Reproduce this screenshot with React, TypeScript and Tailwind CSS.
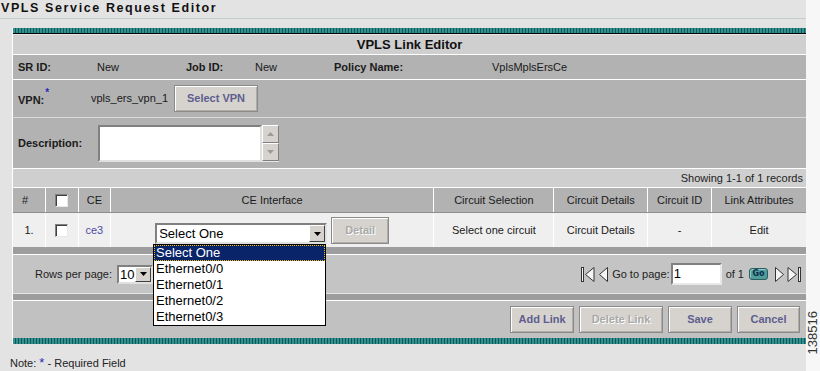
import React from 'react'

const COLS = [
  { label: '#', w: 'w-[32px]' },
  { label: '', w: 'w-[33px]' },
  { label: 'CE', w: 'w-[32px]' },
  { label: 'CE Interface', w: 'w-[324px]' },
  { label: 'Circuit Selection', w: 'w-[120px]' },
  { label: 'Circuit Details', w: 'w-[94px]' },
  { label: 'Circuit ID', w: 'w-[64px]' },
  { label: 'Link Attributes', w: 'w-[95px]' },
]

const OPTIONS = ['Select One', 'Ethernet0/0', 'Ethernet0/1', 'Ethernet0/2', 'Ethernet0/3']

function Stripe({ h }: { h: string }) {
  return (
    <div
      className={`${h} bg-[repeating-linear-gradient(90deg,#35908f_0px,#35908f_2px,#0d5a5a_2px,#0d5a5a_3px)]`}
    />
  )
}

function Checkbox() {
  return (
    <span className="inline-block w-[13px] h-[13px] bg-white border border-t-[#808080] border-l-[#808080] border-b-[#e8e8e8] border-r-[#e8e8e8] shadow-[inset_1px_1px_0_#404040]" />
  )
}

function Btn({ children, disabled, w }: { children: React.ReactNode; disabled?: boolean; w: string }) {
  return (
    <button
      className={`${w} h-[27px] bg-[#d6d3ce] border border-[#8a8a8a] shadow-[inset_1px_1px_0_#ffffff,inset_-1px_-1px_0_#b0aca6] text-[11px] font-bold ${
        disabled ? 'text-[#a9a9a9] [text-shadow:1px_1px_0_#ffffff]' : 'text-[#5e5e8e]'
      }`}
    >
      {children}
    </button>
  )
}

function Arrow({ up }: { up?: boolean }) {
  return (
    <svg width="7" height="4" viewBox="0 0 7 4">
      <path d={up ? 'M0 4 L3.5 0 L7 4 Z' : 'M0 0 L3.5 4 L7 0 Z'} fill="currentColor" />
    </svg>
  )
}

function DropBtn({ h }: { h: string }) {
  return (
    <span
      className={`${h} w-[16px] flex items-center justify-center bg-[#d6d3ce] border border-t-white border-l-white border-b-[#404040] border-r-[#404040] text-black`}
    >
      <Arrow />
    </span>
  )
}

// first / previous / next / last page glyphs
function FirstIcon() {
  return (
    <svg width="14" height="17" viewBox="0 0 14 17">
      <rect x="0.5" y="1.5" width="2" height="14" fill="#f4f4f4" stroke="#333" strokeWidth="1" />
      <path d="M13 1.5 L4.5 8.5 L13 15.5 Z" fill="#f4f4f4" stroke="#333" strokeWidth="1" />
    </svg>
  )
}
function PrevIcon() {
  return (
    <svg width="9" height="17" viewBox="0 0 9 17">
      <path d="M8.5 1.5 L0.5 8.5 L8.5 15.5 Z" fill="#f4f4f4" stroke="#333" strokeWidth="1" />
    </svg>
  )
}
function NextIcon() {
  return (
    <svg width="9" height="17" viewBox="0 0 9 17">
      <path d="M0.5 1.5 L8.5 8.5 L0.5 15.5 Z" fill="#f4f4f4" stroke="#333" strokeWidth="1" />
    </svg>
  )
}
function LastIcon() {
  return (
    <svg width="14" height="17" viewBox="0 0 14 17">
      <path d="M1 1.5 L9.5 8.5 L1 15.5 Z" fill="#f4f4f4" stroke="#333" strokeWidth="1" />
      <rect x="11.5" y="1.5" width="2" height="14" fill="#f4f4f4" stroke="#333" strokeWidth="1" />
    </svg>
  )
}

export default function App() {
  return (
    <div className="relative w-[820px] h-[371px] overflow-hidden bg-[#f7f7f7] font-['Liberation_Sans',Arial,sans-serif] text-[11px] text-[#1a1a1a]">
      <div className="w-[806px] h-full bg-[#e3e3e3]">
        {/* Title */}
        <div className="h-[18px] pl-[1px] pt-[1px] text-[12.5px] font-bold tracking-[1.6px] text-[#111] leading-[15px]">
          VPLS Service Request Editor
        </div>
        <div className="h-px bg-[#c3cfcf]" />

        {/* Panel */}
        <div className="ml-[12px] mt-[9px] border-l border-white">
          <Stripe h="h-[5px]" />
          <div className="h-px bg-black" />
          <div className="h-px bg-[#e6e6e6]" />
          <div className="h-[19px] bg-[#cfcfcf] flex items-center justify-center text-[13px] font-bold text-[#111]">
            VPLS Link Editor
          </div>
          <div className="h-px bg-white" />

          <div className="h-[24px] bg-[#b2b2b2] flex items-center pl-[5px]">
            <span className="w-[79px] font-bold">SR ID:</span>
            <span className="w-[89px]">New</span>
            <span className="w-[69px] font-bold">Job ID:</span>
            <span className="w-[79px]">New</span>
            <span className="w-[158px] font-bold">Policy Name:</span>
            <span>VplsMplsErsCe</span>
          </div>
          <div className="h-px bg-white" />

          <div className="h-[37px] bg-[#b2b2b2] flex items-center pl-[5px]">
            <span className="w-[73px] font-bold flex items-start pt-[3px]">
              VPN:<span className="text-[#2a2ab8] text-[10px] leading-[8px] ml-[1px] -mt-[3px]">*</span>
            </span>
            <span className="w-[83px]">vpls_ers_vpn_1</span>
            <Btn w="w-[84px]">Select VPN</Btn>
          </div>
          <div className="h-px bg-[#d9d9d9]" />

          <div className="h-[50px] bg-[#b2b2b2] flex items-center pl-[5px]">
            <span className="w-[80px] font-bold">Description:</span>
            <div className="flex h-[37px]">
              <div className="w-[164px] h-full bg-white border-2 border-t-[#808080] border-l-[#808080] border-b-[#e0e0e0] border-r-[#e0e0e0]" />
              <div className="flex flex-col w-[17px] h-full bg-[#e6e6e6]">
                <span className="h-[18px] flex items-center justify-center bg-[#d6d3ce] border border-t-white border-l-white border-b-[#808080] border-r-[#808080] text-[#9a9a9a]">
                  <Arrow up />
                </span>
                <span className="h-[18px] flex items-center justify-center bg-[#d6d3ce] border border-t-white border-l-white border-b-[#808080] border-r-[#808080] text-[#9a9a9a]">
                  <Arrow />
                </span>
              </div>
            </div>
          </div>
          <div className="h-px bg-white" />

          <div className="h-[18px] bg-[#cfcfcf] flex items-center justify-end pr-[3px] text-[#222]">
            Showing 1-1 of 1 records
          </div>
          <div className="h-px bg-white" />

          {/* Table header */}
          <div className="h-[24px] bg-[#b2b2b2] flex">
            {COLS.map((c, i) => (
              <div
                key={i}
                className={`${c.w} h-full flex items-center ${i === 0 ? 'pl-[9px]' : 'justify-center border-l border-white'}`}
              >
                {i === 1 ? <Checkbox /> : c.label}
              </div>
            ))}
          </div>
          <div className="h-px bg-[#8e8e8e]" />

          {/* Data row */}
          <div className="relative h-[34px] bg-[#efefef] flex">
            <div className="w-[32px] flex items-center justify-center">1.</div>
            <div className="w-[33px] flex items-center justify-center border-l border-white">
              <Checkbox />
            </div>
            <div className="w-[32px] flex items-center justify-center border-l border-white text-[#4c4ca6]">ce3</div>
            <div className="w-[324px] flex items-center justify-center gap-[4px] border-l border-white">
              <div className="w-[172px] h-[21px] mt-[7px] bg-white border-2 border-t-[#808080] border-l-[#808080] border-b-[#e0e0e0] border-r-[#e0e0e0] flex items-center justify-between">
                <span className="pl-[2px] text-[13px] leading-[15px] text-black">Select One</span>
                <DropBtn h="h-[17px]" />
              </div>
              <Btn w="w-[58px]" disabled>
                Detail
              </Btn>
            </div>
            <div className="w-[120px] flex items-center justify-center border-l border-white">Select one circuit</div>
            <div className="w-[94px] flex items-center justify-center border-l border-white">Circuit Details</div>
            <div className="w-[64px] flex items-center justify-center border-l border-white">-</div>
            <div className="w-[95px] flex items-center justify-center border-l border-white">Edit</div>

            {/* Open dropdown list */}
            <div className="absolute left-[140px] top-[31px] z-10 w-[173px] bg-white border border-black text-[13px] leading-[16px] text-black">
              {OPTIONS.map((o, i) => (
                <div
                  key={o}
                  className={`h-[16px] pl-[2px] ${i === 0 ? 'bg-[#0a246a] text-white outline outline-1 outline-dotted outline-[#f0c000] -outline-offset-1' : ''}`}
                >
                  {o}
                </div>
              ))}
            </div>
          </div>
          <div className="h-[7px] bg-[#9d9d9d]" />
          <div className="h-px bg-white" />

          {/* Pagination */}
          <div className="h-[38px] bg-[#c4c4c4] flex items-center justify-between pl-[22px] pr-[5px]">
            <div className="flex items-center gap-[5px] text-[#222]">
              <span>Rows per page:</span>
              <div className="w-[36px] h-[19px] bg-white border-2 border-t-[#808080] border-l-[#808080] border-b-[#e0e0e0] border-r-[#e0e0e0] flex items-center justify-between">
                <span className="pl-[1px] text-[13px] text-black leading-[15px]">10</span>
                <DropBtn h="h-[15px]" />
              </div>
            </div>
            <div className="flex items-center text-[#222]">
              <FirstIcon />
              <span className="ml-[4px] flex"><PrevIcon /></span>
              <span className="ml-[4px]">Go to page:</span>
              <div className="ml-px w-[51px] h-[22px] bg-white border-2 border-t-[#808080] border-l-[#808080] border-b-[#e8e8e8] border-r-[#e8e8e8] flex items-center pl-[1px] text-[13px] text-black">
                1
              </div>
              <span className="ml-[4px]">of 1</span>
              <span className="ml-[5px] w-[19px] h-[12px] rounded-[3px] bg-[#4f9c9a] border border-[#2b5e5e] shadow-[inset_1px_1px_0_#8fcaca] flex items-center justify-center text-[8px] font-bold text-[#0b2e4e] leading-[10px] font-['DejaVu_Sans',sans-serif]">
                Go
              </span>
              <span className="ml-[7px] flex"><NextIcon /></span>
              <span className="ml-[3px] flex"><LastIcon /></span>
            </div>
          </div>
          <div className="h-px bg-[#e4e4e4]" />
          <div className="h-[6px] bg-[#9d9d9d]" />
          <div className="h-px bg-white" />

          {/* Buttons */}
          <div className="h-[37px] bg-[#c1c1c1] flex items-center justify-end gap-[5px] pr-[6px]">
            <Btn w="w-[64px]">Add Link</Btn>
            <Btn w="w-[84px]" disabled>
              Delete Link
            </Btn>
            <Btn w="w-[64px]">Save</Btn>
            <Btn w="w-[63px]">Cancel</Btn>
          </div>
          <Stripe h="h-[6px]" />
        </div>

        <div className="mt-[11px] pl-[10px] text-[11px] text-[#222]">
          Note: <span className="text-[#2a2ab8] text-[13px] leading-[11px]">*</span> - Required Field
        </div>
      </div>

      <div className="absolute right-[0px] top-[300px] w-[14px] h-[66px] flex items-center justify-center">
        <span className="-rotate-90 whitespace-nowrap text-[13px] text-[#333] font-['Liberation_Sans',Arial,sans-serif]">138516</span>
      </div>
    </div>
  )
}
